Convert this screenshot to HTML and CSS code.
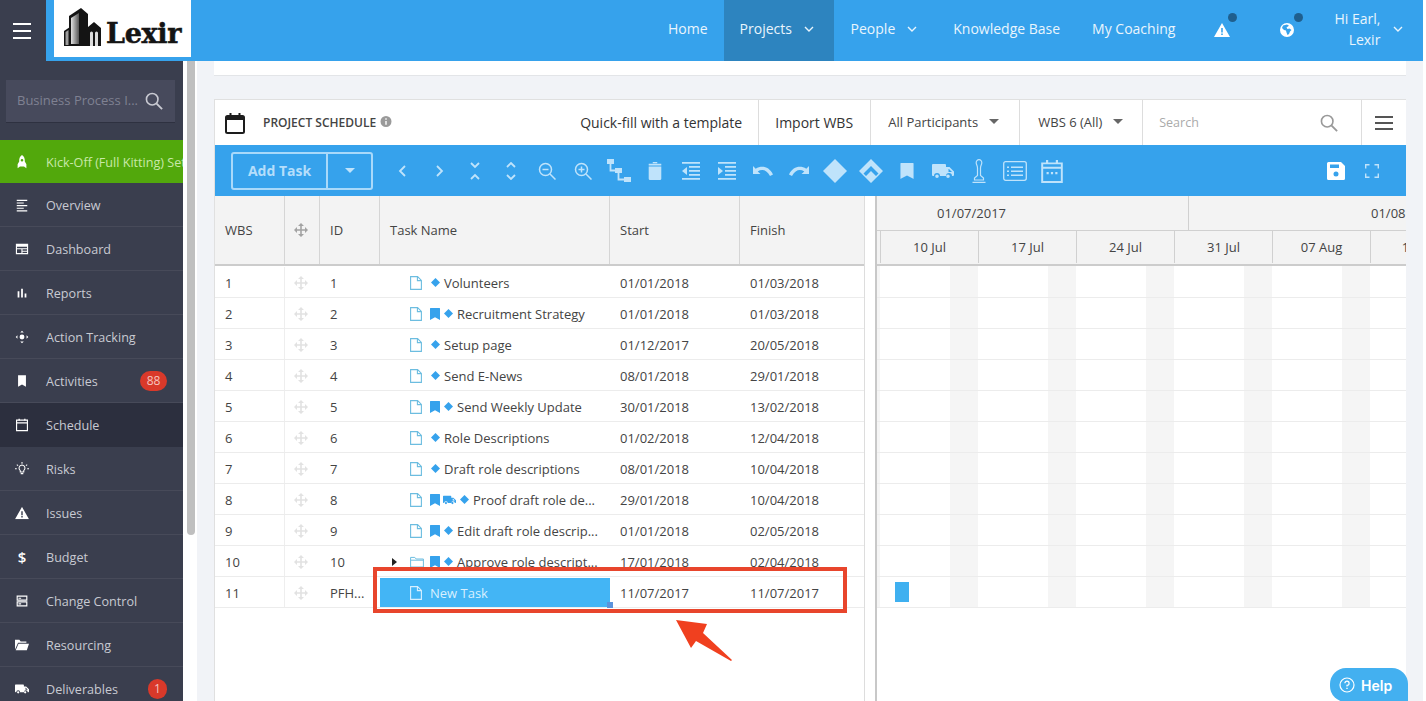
FILE: index.html
```html
<!DOCTYPE html>
<html lang="en">
<head>
<meta charset="utf-8">
<title>Project Schedule</title>
<link rel="stylesheet" href="styles.css">
</head>
<body>
<svg class="sprite" aria-hidden="true">
  <defs><linearGradient id="g-tower" x1="0" y1="0" x2="1" y2="0"><stop offset="0" stop-color="#e2e2e2"/><stop offset="1" stop-color="#555"/></linearGradient></defs>
  <symbol id="i-move" viewBox="0 0 14 14"><path d="M7 0l3 3H4zM7 14l3-3H4zM0 7l3-3v6zM14 7l-3-3v6zM6.200 3h1.600v8H6.200zM3 6.200h8v1.600H3z" fill="currentColor"/></symbol>
  <symbol id="i-file" viewBox="0 0 12 14"><path d="M.6.6h7l3.800 3.800v9H.6zM7.400.6v4h4" fill="none" stroke="currentColor" stroke-width="1.100"/></symbol>
  <symbol id="i-folder" viewBox="0 0 14 12"><path d="M.6 1.400h4.200l1.400 1.600h7.200v8H.6zM.6 4.200h12.800" fill="none" stroke="currentColor" stroke-width="1"/></symbol>
  <symbol id="i-diamond" viewBox="0 0 10 10"><path d="M5 0l5 5-5 5-5-5z" fill="currentColor"/></symbol>
  <symbol id="i-book" viewBox="0 0 10 12"><path d="M0 .5A.5.5 0 0 1 .5 0h9a.5.5 0 0 1 .5.5V12L5 9.300 0 12z" fill="currentColor"/></symbol>
  <symbol id="i-truck" viewBox="0 0 22 16"><path d="M1 1h12a1 1 0 0 1 1 1v2h3.500l4.500 4.500V12a1 1 0 0 1-1 1h-1a3 3 0 0 0-6 0H8a3 3 0 0 0-6 0H1a1 1 0 0 1-1-1V2a1 1 0 0 1 1-1zm15.500 5v3H20l-3-3z M5 11.400a1.800 1.800 0 1 1 0 3.600 1.800 1.800 0 0 1 0-3.600zm11 0a1.800 1.800 0 1 1 0 3.600 1.800 1.800 0 0 1 0-3.600z" fill="currentColor" fill-rule="evenodd"/></symbol>
  <symbol id="i-search" viewBox="0 0 20 20"><circle cx="8" cy="8" r="6.400" fill="none" stroke="currentColor" stroke-width="1.800"/><path d="M12.600 12.600L19 19" stroke="currentColor" stroke-width="2" fill="none"/></symbol>
  <symbol id="i-warn" viewBox="0 0 16 14"><path fill-rule="evenodd" d="M8 0l8 14H0zM7.200 5v4.500h1.600V5zm0 5.500v1.600h1.600v-1.600z" fill="currentColor"/></symbol>
  <symbol id="i-cal" viewBox="0 0 20 22"><rect x="1" y="4" width="18" height="17" rx="1.500" fill="none" stroke="currentColor" stroke-width="2"/><path d="M1 4h18v4H1zM4.500 1h2v3h-2zM13.500 1h2v3h-2z" fill="currentColor"/></symbol>
  <symbol id="i-undo" viewBox="0 0 22 12"><path d="M1 1v8h7.500L5.700 6.400C10 3.800 14.500 4.500 18 11l3-1.500C17 1.500 10 .2 3.700 3.700z" fill="currentColor"/></symbol>
</svg>

<div class="app">
  <header class="topbar">
    <button class="burger" aria-label="Menu"><span></span><span></span><span></span></button>
    <div class="logo">
      <svg class="logo-mark" viewBox="0 0 38 39" aria-hidden="true">
        <path d="M0 24l6-4v19H0zM5 9l12-8 7 6v32H5zM24 20l6-5 7 6v18H24z" fill="#141414"/>
        <path d="M7 11l8-5v31H7z" fill="url(#g-tower)"/>
        <path d="M1.500 25l3-2v15h-3z" fill="#9d9d9d"/>
        <path d="M26 39V26a1.500 1.500 0 0 1 3 0v13zM31 39V26a1.500 1.500 0 0 1 3 0v13z" fill="#fff" opacity=".85"/>
      </svg>
      <span class="logo-text">Lexir</span>
    </div>
    <nav class="nav">
      <a class="nav-item nav-home">Home</a>
      <a class="nav-item nav-active">Projects<svg class="chev" viewBox="0 0 10 6"><path d="M1 1l4 4 4-4" fill="none" stroke="currentColor" stroke-width="1.400"/></svg></a>
      <a class="nav-item nav-people">People<svg class="chev" viewBox="0 0 10 6"><path d="M1 1l4 4 4-4" fill="none" stroke="currentColor" stroke-width="1.400"/></svg></a>
      <a class="nav-item nav-kb">Knowledge Base</a>
      <a class="nav-item nav-coach">My Coaching</a>
      <span class="nav-icon nav-icon-warn"><svg class="ic14" viewBox="0 0 16 14"><use href="#i-warn"/></svg><i class="dot"></i></span>
      <span class="nav-icon nav-icon-globe"><svg class="ic14" viewBox="0 0 14 14"><path fill-rule="evenodd" d="M7 0a7 7 0 1 1 0 14A7 7 0 0 1 7 0zM3 2.500L2 5l2 2 2 .5.500 2 1 2.500 1.500-1 1-2.500 1.500-1.500-2-1.500-2 .5-1-1.500L9 2.800 7 1.500z" fill="currentColor"/></svg><i class="dot"></i></span>
      <span class="nav-user">Hi Earl,<br>Lexir</span>
      <svg class="chev chev-user" viewBox="0 0 10 6"><path d="M1 1l4 4 4-4" fill="none" stroke="currentColor" stroke-width="1.400"/></svg>
    </nav>
  </header>

  <div class="main">
    <aside class="sidebar">
      <div class="side-search"><span class="side-search-text">Business Process I...</span><svg class="ic18" viewBox="0 0 20 20"><use href="#i-search"/></svg></div>
      <a class="side-item side-green"><svg class="side-ic" viewBox="0 0 16 16"><path fill-rule="evenodd" d="M8 0c2.600 1.700 3.400 4.500 3.200 7.300l1.800 3.200V15l-2.700-2H5.700L3 15v-4.500l1.800-3.200C4.600 4.500 5.400 1.700 8 0zm0 4.500a1.500 1.500 0 1 0 0 3 1.500 1.500 0 0 0 0-3z" fill="currentColor"/></svg><span class="side-label">Kick-Off (Full Kitting) Setup</span></a>
      <a class="side-item"><svg class="side-ic" viewBox="0 0 16 16"><path d="M2 2h12v1.300H2zM2 5h8v1.300H2zM2 8h12v1.300H2zM2 11h8v1.300H2zM2 14h12v1.300H2z" fill="currentColor"/></svg><span class="side-label">Overview</span></a>
      <a class="side-item"><svg class="side-ic" viewBox="0 0 16 16"><path fill-rule="evenodd" d="M1 2h14v12H1zM2.300 5.500V7h11.400V5.500zM2.300 8.300v4.400h5V8.300zm6.300 0v1.600h5.100V8.300zm0 2.800v1.600h5.100v-1.600z" fill="currentColor"/></svg><span class="side-label">Dashboard</span></a>
      <a class="side-item"><svg class="side-ic" viewBox="0 0 16 16"><path d="M3 6h2v7H3zM7 3h2v10H7zM11 8.500h2V13h-2z" fill="currentColor"/></svg><span class="side-label">Reports</span></a>
      <a class="side-item"><svg class="side-ic" viewBox="0 0 16 16"><circle cx="8" cy="8" r="2.800" fill="currentColor"/><path d="M8 .8l2 2H6zM8 15.200l2-2H6zM.8 8l2-2v4zM15.200 8l-2-2v4z" fill="currentColor"/></svg><span class="side-label">Action Tracking</span></a>
      <a class="side-item"><svg class="side-ic" viewBox="0 0 16 16"><path d="M3.500 1.500h9v13L8 12l-4.500 2.500z" fill="currentColor"/></svg><span class="side-label">Activities</span><b class="badge badge-wide">88</b></a>
      <a class="side-item side-current"><svg class="side-ic" viewBox="0 0 16 16"><path d="M1.800 2.500h12.400v12H1.800zM1.800 5.500h12.400" fill="none" stroke="currentColor" stroke-width="1.300"/><path d="M4 .8h1.500v2H4zM10.500.8H12v2h-1.500z" fill="currentColor"/></svg><span class="side-label">Schedule</span></a>
      <a class="side-item"><svg class="side-ic" viewBox="0 0 16 16"><path d="M8 3.500a3.500 3.500 0 0 1 2 6.300V11.500H6V9.800a3.500 3.500 0 0 1 2-6.300z" fill="none" stroke="currentColor" stroke-width="1.200"/><path d="M6.500 12.700h3V14h-3zM7.400 0h1.200v2H7.400zM0 7h2v1.200H0zM14 7h2v1.200h-2zM2.500 2.500l1.400 1.400-.8.800-1.400-1.400zM13.500 2.500l-1.400 1.400.8.800 1.400-1.400z" fill="currentColor"/></svg><span class="side-label">Risks</span></a>
      <a class="side-item"><svg class="side-ic" viewBox="0 0 16 14"><use href="#i-warn"/></svg><span class="side-label">Issues</span></a>
      <a class="side-item"><span class="side-ic side-dollar">$</span><span class="side-label">Budget</span></a>
      <a class="side-item"><svg class="side-ic" viewBox="0 0 16 16"><path d="M2.500 2.500h11v4.500h-11zM2.500 9h11v4.500h-11z" fill="none" stroke="currentColor" stroke-width="1.300"/><path d="M4 4.200h3v1.200H4zM4 10.700h3v1.200H4z" fill="currentColor"/></svg><span class="side-label">Change Control</span></a>
      <a class="side-item"><svg class="side-ic" viewBox="0 0 16 14"><path d="M0 1h5l1.500 2H13v1.500H3.500L0 12zM4 5.500h12L13.500 13H.8z" fill="currentColor"/></svg><span class="side-label">Resourcing</span></a>
      <a class="side-item"><svg class="side-ic" viewBox="0 0 22 16"><use href="#i-truck"/></svg><span class="side-label">Deliverables</span><b class="badge">1</b></a>
    </aside>
    <div class="scrolltrack"><div class="scrollthumb"></div></div>

    <main class="content">
      <div class="strip"></div>
      <section class="card">
        <div class="card-head">
          <svg class="head-cal" viewBox="0 0 20 22"><use href="#i-cal"/></svg>
          <span class="head-title">PROJECT SCHEDULE</span>
          <svg class="head-info" viewBox="0 0 12 12"><path fill-rule="evenodd" d="M6 0a5.500 5.500 0 1 1 0 11A5.500 5.500 0 0 1 6 0zM5.300 2.300v1.500h1.400V2.300zm0 2.700v3.800h1.400V5z" fill="currentColor"/></svg>
          <a class="head-btn head-quick">Quick-fill with a template</a>
          <a class="head-btn head-import">Import WBS</a>
          <a class="head-sel head-part">All Participants<i class="caret"></i></a>
          <a class="head-sel head-wbs">WBS 6 (All)<i class="caret"></i></a>
          <div class="head-search"><span>Search</span><svg class="ic20" viewBox="0 0 20 20"><use href="#i-search"/></svg></div>
          <div class="head-menu"><span></span><span></span><span></span></div>
        </div>

        <div class="toolbar">
          <div class="addgroup"><span class="add-main">Add Task</span><span class="add-drop"><i class="caret caret-light"></i></span></div>
          <div class="tools">
            <svg class="tool" viewBox="0 0 18 18"><path d="M11 4L6 9l5 5" fill="none" stroke="currentColor" stroke-width="1.800"/></svg>
            <svg class="tool" viewBox="0 0 18 18"><path d="M7 4l5 5-5 5" fill="none" stroke="currentColor" stroke-width="1.800"/></svg>
            <svg class="tool" viewBox="0 0 18 18"><path d="M5 1l4 4 4-4M5 17l4-4 4 4" fill="none" stroke="currentColor" stroke-width="1.800"/></svg>
            <svg class="tool" viewBox="0 0 18 18"><path d="M5 5l4-4 4 4M5 13l4 4 4-4" fill="none" stroke="currentColor" stroke-width="1.800"/></svg>
            <svg class="tool" viewBox="0 0 18 18"><circle cx="7.500" cy="7.500" r="6" fill="none" stroke="currentColor" stroke-width="1.500"/><path d="M12 12l5.500 5.500M4.500 7.500h6" stroke="currentColor" stroke-width="1.500"/></svg>
            <svg class="tool" viewBox="0 0 18 18"><circle cx="7.500" cy="7.500" r="6" fill="none" stroke="currentColor" stroke-width="1.500"/><path d="M12 12l5.500 5.500M4.500 7.500h6M7.500 4.500v6" stroke="currentColor" stroke-width="1.500"/></svg>
            <svg class="tool tool-lg" viewBox="0 0 24 24"><path d="M0 0h7v5H0zM8 9h7v5H8zM17 18h7v5h-7z" fill="currentColor"/><path d="M3.500 5v6.500H8M11.500 14v6.500H17" fill="none" stroke="currentColor" stroke-width="1.800"/></svg>
            <svg class="tool" viewBox="0 0 18 20"><path d="M6.500 0h5v1.500h-5zM2 2h14v2H2zM2 5h14v13.500a1.500 1.500 0 0 1-1.500 1.500h-11A1.500 1.500 0 0 1 2 18.500z" fill="currentColor"/></svg>
            <svg class="tool" viewBox="0 0 18 18"><path d="M0 0h18v1.800H0zM7 4h11v1.800H7zM7 8h11v1.800H7zM7 12h11v1.800H7zM0 16h18v1.800H0zM5 5v8L0 9z" fill="currentColor"/></svg>
            <svg class="tool" viewBox="0 0 18 18"><path d="M0 0h18v1.800H0zM7 4h11v1.800H7zM7 8h11v1.800H7zM7 12h11v1.800H7zM0 16h18v1.800H0zM0 5v8l5-4z" fill="currentColor"/></svg>
            <svg class="tool tool-wide" viewBox="0 0 22 12"><use href="#i-undo"/></svg>
            <svg class="tool tool-wide tool-flip" viewBox="0 0 22 12"><use href="#i-undo"/></svg>
            <svg class="tool tool-lg" viewBox="0 0 24 24"><path d="M12 0l12 12-12 12L0 12z" fill="currentColor"/></svg>
            <svg class="tool tool-lg" viewBox="0 0 24 24"><path fill-rule="evenodd" d="M12 0l12 12-12 12L0 12zM12 7l-7.500 7.500L7 17l5-5 5 5 2.500-2.500z" fill="currentColor"/></svg>
            <svg class="tool" viewBox="0 0 15 20"><use href="#i-book"/></svg>
            <svg class="tool tool-wide tool-truck" viewBox="0 0 22 16"><use href="#i-truck"/></svg>
            <svg class="tool tool-lg" viewBox="0 0 16 24"><path d="M8 .7a2.800 2.800 0 0 1 2.800 3c0 2-1.300 2.800-1.300 5.300v7.500l3 2.500v2H3.500v-2l3-2.500V9c0-2.500-1.300-3.300-1.300-5.300A2.800 2.800 0 0 1 8 .7zM1.500 23.300h13" fill="none" stroke="currentColor" stroke-width="1.200"/></svg>
            <svg class="tool tool-lg" viewBox="0 0 24 20"><rect x=".7" y=".7" width="22.600" height="18.600" rx="2" fill="none" stroke="currentColor" stroke-width="1.300"/><path d="M4 5.500h2v1.500H4zM8 5.500h12v1.500H8zM4 9.500h2v1.500H4zM8 9.500h12v1.500H8zM4 13.500h2v1.500H4zM8 13.500h12v1.500H8z" fill="currentColor"/></svg>
            <svg class="tool tool-lg tool-last" viewBox="0 0 20 22"><path d="M1 4h18v17H1zM1 8h18" fill="none" stroke="currentColor" stroke-width="1.800"/><path d="M4.500 1h2v3h-2zM13.500 1h2v3h-2zM5 12h2v2H5zM9 12h2v2H9zM13 12h2v2h-2z" fill="currentColor"/></svg>
          </div>
          <div class="tools-right">
            <svg class="tool tool-save" viewBox="0 0 18 18"><path fill-rule="evenodd" d="M1.500 0H14l4 4v12.500a1.500 1.500 0 0 1-1.500 1.500h-15A1.500 1.500 0 0 1 0 16.500v-15A1.500 1.500 0 0 1 1.500 0zM3 2.500V6h9V2.500zM9 9.500a2.500 2.500 0 1 0 0 5 2.500 2.500 0 0 0 0-5z" fill="currentColor"/></svg>
            <svg class="tool tool-full" viewBox="0 0 14 14"><path d="M.7 4.500V.7h3.800M9.500.7h3.800v3.800M13.300 9.500v3.800H9.500M4.500 13.300H.7V9.500" fill="none" stroke="currentColor" stroke-width="1.400"/></svg>
          </div>
        </div>

        <div class="grid-wrap">
          <div class="table">
            <div class="thead">
              <div class="c c-wbs">WBS</div>
              <div class="c c-drag"><svg class="ic-move ic-move-h"><use href="#i-move"/></svg></div>
              <div class="c c-id">ID</div>
              <div class="c c-name">Task Name</div>
              <div class="c c-date">Start</div>
              <div class="c c-finish">Finish</div>
            </div>
            <div class="row"><div class="c c-wbs">1</div><div class="c c-drag"><svg class="ic-move"><use href="#i-move"/></svg></div><div class="c c-id">1</div><div class="c c-name t"><svg class="ic-file"><use href="#i-file"/></svg><svg class="ic-dia"><use href="#i-diamond"/></svg><span class="tn">Volunteers</span></div><div class="c c-date">01/01/2018</div><div class="c c-finish">01/03/2018</div></div>
            <div class="row"><div class="c c-wbs">2</div><div class="c c-drag"><svg class="ic-move"><use href="#i-move"/></svg></div><div class="c c-id">2</div><div class="c c-name t"><svg class="ic-file"><use href="#i-file"/></svg><svg class="ic-book"><use href="#i-book"/></svg><svg class="ic-dia"><use href="#i-diamond"/></svg><span class="tn">Recruitment Strategy</span></div><div class="c c-date">01/01/2018</div><div class="c c-finish">01/03/2018</div></div>
            <div class="row"><div class="c c-wbs">3</div><div class="c c-drag"><svg class="ic-move"><use href="#i-move"/></svg></div><div class="c c-id">3</div><div class="c c-name t"><svg class="ic-file"><use href="#i-file"/></svg><svg class="ic-dia"><use href="#i-diamond"/></svg><span class="tn">Setup page</span></div><div class="c c-date">01/12/2017</div><div class="c c-finish">20/05/2018</div></div>
            <div class="row"><div class="c c-wbs">4</div><div class="c c-drag"><svg class="ic-move"><use href="#i-move"/></svg></div><div class="c c-id">4</div><div class="c c-name t"><svg class="ic-file"><use href="#i-file"/></svg><svg class="ic-dia"><use href="#i-diamond"/></svg><span class="tn">Send E-News</span></div><div class="c c-date">08/01/2018</div><div class="c c-finish">29/01/2018</div></div>
            <div class="row"><div class="c c-wbs">5</div><div class="c c-drag"><svg class="ic-move"><use href="#i-move"/></svg></div><div class="c c-id">5</div><div class="c c-name t"><svg class="ic-file"><use href="#i-file"/></svg><svg class="ic-book"><use href="#i-book"/></svg><svg class="ic-dia"><use href="#i-diamond"/></svg><span class="tn">Send Weekly Update</span></div><div class="c c-date">30/01/2018</div><div class="c c-finish">13/02/2018</div></div>
            <div class="row"><div class="c c-wbs">6</div><div class="c c-drag"><svg class="ic-move"><use href="#i-move"/></svg></div><div class="c c-id">6</div><div class="c c-name t"><svg class="ic-file"><use href="#i-file"/></svg><svg class="ic-dia"><use href="#i-diamond"/></svg><span class="tn">Role Descriptions</span></div><div class="c c-date">01/02/2018</div><div class="c c-finish">12/04/2018</div></div>
            <div class="row"><div class="c c-wbs">7</div><div class="c c-drag"><svg class="ic-move"><use href="#i-move"/></svg></div><div class="c c-id">7</div><div class="c c-name t"><svg class="ic-file"><use href="#i-file"/></svg><svg class="ic-dia"><use href="#i-diamond"/></svg><span class="tn">Draft role descriptions</span></div><div class="c c-date">08/01/2018</div><div class="c c-finish">10/04/2018</div></div>
            <div class="row"><div class="c c-wbs">8</div><div class="c c-drag"><svg class="ic-move"><use href="#i-move"/></svg></div><div class="c c-id">8</div><div class="c c-name t"><svg class="ic-file"><use href="#i-file"/></svg><svg class="ic-book"><use href="#i-book"/></svg><svg class="ic-truck"><use href="#i-truck"/></svg><svg class="ic-dia"><use href="#i-diamond"/></svg><span class="tn">Proof draft role de...</span></div><div class="c c-date">29/01/2018</div><div class="c c-finish">10/04/2018</div></div>
            <div class="row"><div class="c c-wbs">9</div><div class="c c-drag"><svg class="ic-move"><use href="#i-move"/></svg></div><div class="c c-id">9</div><div class="c c-name t"><svg class="ic-file"><use href="#i-file"/></svg><svg class="ic-book"><use href="#i-book"/></svg><svg class="ic-dia"><use href="#i-diamond"/></svg><span class="tn">Edit draft role descrip...</span></div><div class="c c-date">01/01/2018</div><div class="c c-finish">02/05/2018</div></div>
            <div class="row"><div class="c c-wbs">10</div><div class="c c-drag"><svg class="ic-move"><use href="#i-move"/></svg></div><div class="c c-id">10</div><div class="c c-name t t-parent"><i class="tri"></i><svg class="ic-file ic-folder"><use href="#i-folder"/></svg><svg class="ic-book"><use href="#i-book"/></svg><svg class="ic-dia"><use href="#i-diamond"/></svg><span class="tn">Approve role descript...</span></div><div class="c c-date">17/01/2018</div><div class="c c-finish">02/04/2018</div></div>
            <div class="row"><div class="c c-wbs">11</div><div class="c c-drag"><svg class="ic-move"><use href="#i-move"/></svg></div><div class="c c-id">PFH...</div><div class="c c-name t t-selected"><svg class="ic-file"><use href="#i-file"/></svg><span class="tn">New Task</span><i class="handle"></i></div><div class="c c-date">11/07/2017</div><div class="c c-finish">11/07/2017</div></div>
          </div>

          <div class="splitter"></div>

          <div class="gantt">
            <div class="g-head1"><div class="g-month g-month1">01/07/2017</div><div class="g-month g-month2">01/08</div></div>
            <div class="g-head2"><div class="g-stub"></div><div class="g-week">10 Jul</div><div class="g-week">17 Jul</div><div class="g-week">24 Jul</div><div class="g-week">31 Jul</div><div class="g-week">07 Aug</div><div class="g-week g-week-end">14 Aug</div></div>
            <div class="g-body">
              <div class="g-row"></div><div class="g-row"></div><div class="g-row"></div><div class="g-row"></div><div class="g-row"></div><div class="g-row"></div><div class="g-row"></div><div class="g-row"></div><div class="g-row"></div><div class="g-row"></div>
              <div class="g-row"><div class="g-bar"></div></div>
            </div>
          </div>
        </div>
      </section>
    </main>
  </div>
  <div class="help"><svg viewBox="0 0 16 16"><circle cx="8" cy="8" r="7" fill="none" stroke="currentColor" stroke-width="1.200"/><path d="M5.900 6.200A2.100 2.100 0 1 1 8 8.300v1.200" fill="none" stroke="currentColor" stroke-width="1.200"/><path d="M7.300 10.700h1.400v1.400H7.300z" fill="currentColor"/></svg>Help</div>
  <div class="mark-box"></div>
  <svg class="mark-arrow" viewBox="0 0 60 43"><path d="M1 1l31 4-4 9 29 27-1 1-35-20-5 7z" fill="#f0401f"/></svg>
</div>
</body>
</html>
```
FILE: styles.css
```css
* { box-sizing: border-box; }
html, body { margin: 0; height: 100%; overflow: hidden; background: #fff; }
body { font-family: "Open Sans", "Liberation Sans", sans-serif; font-size: 13px; color: #444; }
.sprite { position: absolute; width: 0; height: 0; }
a { display: block; }
svg { display: block; flex: none; }

.app { position: relative; width: 1423px; height: 701px; display: flex; flex-direction: column; overflow: hidden; }

/* top bar */
.topbar { height: 61px; flex: none; background: #36a2ec; display: flex; color: #e9f5fd; }
.burger { width: 46px; height: 61px; background: #3a3e4e; border: 0; padding: 23px 13px 0; display: flex; flex-direction: column; gap: 3px; }
.burger span { display: block; height: 2px; width: 18px; background: #fff; margin-bottom: 2px; }
.logo { margin-left: 8px; width: 137px; height: 57px; background: #fff; display: flex; align-items: flex-start; padding: 7px 0 0 10px; gap: 4px; }
.logo-mark { width: 38px; height: 39px; }
.logo-text { font-family: "DejaVu Serif", serif; font-weight: 700; font-size: 27px; line-height: 30px; color: #141414; margin-top: 12px; letter-spacing: -.3px; -webkit-text-stroke: .5px #141414; }
.nav { flex: 1; display: flex; align-items: center; height: 61px; padding-left: 460px; font-size: 14px; }
.nav-item { height: 61px; line-height: 58px; padding: 0 16px 4px; display: flex; align-items: center; white-space: nowrap; }
.nav-home { padding-left: 17px; }
.nav-active { background: #2d84bf; width: 110px; }
.nav-people { padding-left: 17px; }
.chev { width: 10px; height: 6px; margin-left: 12px; }
.nav-kb { margin-left: 4px; }
.nav-icon { position: relative; width: 16px; height: 14px; color: #fff; margin-top: -2px; }
.nav-icon-warn { margin-left: 23px; }
.nav-icon-globe { margin-left: 50px; width: 14px; }
.ic14 { width: 100%; height: 100%; }
.dot { position: absolute; width: 9px; height: 9px; border-radius: 50%; background: #1f5f8e; left: 14px; top: -10px; }
.nav-user { margin-left: 40px; width: 46px; text-align: right; line-height: 21px; margin-top: -3px; }
.chev-user { margin-left: 13px; margin-top: -4px; }

/* sidebar */
.main { flex: 1; min-height: 0; display: flex; }
.sidebar { width: 183px; flex: none; background: #3a3e4e; padding-top: 19px; color: #c8cad2; overflow: hidden; }
.side-search { margin: 0 8px 18px 6px; height: 42px; background: #474a5c; box-shadow: 0 1px 0 #2e3140; display: flex; align-items: center; padding: 0 12px 0 11px; justify-content: space-between; color: #c9cad2; }
.side-search-text { font-size: 13px; color: #7f8192; white-space: nowrap; padding-bottom: 2px; }
.ic18 { width: 18px; height: 18px; }
.side-item { height: 44px; border-bottom: 1px solid #474a59; display: flex; align-items: center; padding-left: 15px; white-space: nowrap; position: relative; font-size: 12.600px; }
.side-label { padding-top: 2px; }
.side-ic { width: 14px; height: 14px; color: #fff; margin-right: 17px; }
.side-dollar { font-size: 15px; line-height: 14px; font-weight: 600; text-align: center; }
.side-green { background: #52a80c; color: #c8e8a8; height: 43px; border: 0; }
.side-current { background: #2c2f3e; border-color: #2c2f3e; }
.badge { position: absolute; right: 16px; top: 12px; min-width: 19px; height: 20px; border-radius: 10px; background: #d9392a; color: #f5c5bf; font-weight: 400; font-size: 12px; line-height: 20px; text-align: center; }
.badge-wide { width: 27px; }

.scrolltrack { width: 14px; flex: none; background: #fff; padding: 0 2px 0 4px; }
.scrollthumb { height: 474px; background: #bfbfbf; border-radius: 0 0 4px 4px; }

/* content */
.content { flex: 1; min-width: 0; background: #f1f3f7; padding: 0 17px; display: flex; flex-direction: column; }
.strip { height: 15px; flex: none; background: #fff; border-bottom: 1px solid #e3e5e8; margin-bottom: 23px; }
.card { flex: 1; min-height: 0; background: #fff; border: 1px solid #e0e0e0; border-bottom: 0; border-right: 0; display: flex; flex-direction: column; }

.card-head { height: 45px; flex: none; display: flex; align-items: center; }
.head-cal { width: 20px; height: 22px; margin-left: 10px; color: #1d1d1d; }
.head-title { margin-left: 18px; font-size: 12px; font-weight: 600; color: #444; white-space: nowrap; }
.head-info { width: 12px; height: 12px; margin: -2px 0 0 4px; color: #9a9a9a; }
.head-btn, .head-sel { height: 45px; display: flex; align-items: center; white-space: nowrap; border-right: 1px solid #ddd; }
.head-btn { font-size: 14px; color: #333; }
.head-quick { margin-left: 188px; padding-right: 16px; }
.head-import { padding: 0 17px 0 16px; width: 112px; }
.head-sel { font-size: 13px; color: #444; padding-bottom: 2px; }
.head-part { width: 149px; padding-left: 17px; }
.head-wbs { width: 123px; padding-left: 18px; }
.caret { width: 0; height: 0; border: 5px solid transparent; border-top: 5px solid #666; border-bottom: 0; margin-left: 11px; }
.caret-light { border-top-color: #bfe3fb; margin: 0; }
.head-search { width: 219px; height: 45px; border-right: 1px solid #ddd; display: flex; align-items: center; justify-content: space-between; padding: 0 23px 0 16px; color: #aaa; font-size: 12.500px; }
.ic20 { width: 18px; height: 18px; color: #999; }
.head-menu { flex: 1; display: flex; flex-direction: column; align-items: center; gap: 4px; }
.head-menu span { display: block; width: 18px; height: 2px; background: #555; }

.toolbar { height: 51px; flex: none; background: #36a2ec; display: flex; align-items: center; color: #bfe3fb; padding-left: 16px; }
.addgroup { display: flex; height: 38px; border: 2px solid #a9d9fa; border-radius: 3px; width: 142px; }
.add-main { width: 95px; border-right: 2px solid #a9d9fa; display: flex; align-items: center; justify-content: center; font-weight: 700; font-size: 14px; color: #b5defb; }
.add-drop { flex: 1; display: flex; align-items: center; justify-content: center; }
.tools { display: flex; align-items: center; margin-left: 12px; }
.tool { width: 18px; height: 18px; margin: 0 9px; color: #bfe3fb; }
.tool-lg { width: 24px; height: 24px; margin: 0 6px; }
.tool-wide { width: 22px; height: 14px; margin: 0 7px; }
.tool-truck { height: 16px; }
.tool-flip { transform: scaleX(-1); }
.tool-last { margin-left: 7px; }
.tools-right { margin-left: auto; display: flex; align-items: center; margin-right: 27px; }
.tools-right .tool { margin: 0; }
.tool-save { color: #fff; }
.tools-right .tool-full { width: 14px; height: 14px; margin-left: 20px; }

.grid-wrap { flex: 1; min-height: 0; display: flex; }
.table { width: 649px; flex: none; }
.thead { height: 70px; display: flex; background: #f3f3f3; border-bottom: 2px solid #ccc; }
.row { height: 31px; display: flex; border-bottom: 1px solid #ececec; }
.thead + .row { height: 32px; padding-top: 1px; }
.c { display: flex; align-items: center; flex: none; padding-left: 10px; white-space: nowrap; border-right: 1px solid #eee; color: #444; }
.row .c { border-right: 0; padding-top: 2px; }
.thead .c { border-right: 1px solid #d5d5d5; }
.c-wbs { width: 70px; }
.row .c-wbs { border-right: 1px solid #eee; }
.c-drag { width: 35px; padding: 0 0 0 9px; }
.c-id { width: 60px; }
.c-name { width: 230px; }
.c-date { width: 130px; }
.c-finish { flex: 1; }
.thead .c-finish { border-right: 0; }
.ic-move { width: 14px; height: 14px; color: #e2e2e2; }
.ic-move-h { color: #a3a3a3; }
.t { padding-left: 30px; position: relative; }
.ic-file { width: 12px; height: 14px; color: #6cbde0; margin-right: 8px; }
.ic-folder { width: 14px; height: 12px; margin-right: 6px; }
.ic-dia { width: 9px; height: 9px; color: #36a2ec; margin: -2px 4px 0 0; }
.ic-file + .ic-dia { margin-left: 1px; }
.ic-book { width: 10px; height: 12px; color: #36a2ec; margin-right: 4px; }
.ic-truck { width: 13px; height: 12px; color: #36a2ec; margin-right: 4px; margin-left: -1px; }
.tn { white-space: nowrap; }
.tri { position: absolute; left: 12px; top: 12px; width: 0; height: 0; border: 4px solid transparent; border-left: 5px solid #222; border-right: 0; }
.row .t-selected { background: #43b5f5; color: #d8f0ff; height: 29px; margin-top: 1px; padding-top: 0; }
.t-selected .ic-file { color: #d8f0ff; }
.handle { position: absolute; right: -3px; bottom: -1px; width: 6px; height: 6px; background: #5b93dc; }

.splitter { width: 13px; flex: none; background: #fff; border-left: 1px solid #ddd; border-right: 2px solid #c8c8c8; }
.gantt { flex: 1; min-width: 0; overflow: hidden; }
.g-head1 { height: 35px; display: flex; background: #f3f3f3; border-bottom: 1px solid #d0d0d0; }
.g-month { flex: none; display: flex; align-items: center; white-space: nowrap; }
.g-month1 { width: 312px; border-right: 1px solid #d0d0d0; justify-content: center; padding-right: 122px; }
.g-month2 { width: 400px; justify-content: flex-start; padding-left: 182px; }
.g-head2 { height: 35px; display: flex; background: #f3f3f3; border-bottom: 2px solid #ccc; padding-bottom: 1px; }
.g-stub { width: 4px; flex: none; border-right: 1px solid #d0d0d0; }
.g-week { width: 98px; flex: none; border-right: 1px solid #d0d0d0; display: flex; align-items: center; justify-content: center; white-space: nowrap; }
.g-week-end { padding-left: 6px; }
.g-body { height: 342px; background-image: linear-gradient(90deg, transparent 70px, #f5f5f5 70px); background-size: 98px 100%; background-position: 3px 0; }
.g-row { height: 31px; border-bottom: 1px solid #ececec; padding: 5px 0 0 18px; }
.g-row:first-child { height: 32px; }
.g-bar { width: 14px; height: 20px; background: #3fb0f0; }

/* overlays */
.help { position: absolute; left: 1330px; top: 668px; width: 78px; height: 34px; border-radius: 16px 16px 0 16px; background: #43b0f0; color: #fff; font-family: "Inter", "Liberation Sans", sans-serif; font-weight: 600; font-size: 14px; display: flex; align-items: center; gap: 6px; padding-left: 9px; }
.help svg { width: 16px; height: 16px; }
.mark-box { position: absolute; left: 373px; top: 567px; width: 474px; height: 46px; border: 4px solid #e8452c; }
.mark-arrow { position: absolute; left: 675px; top: 619px; width: 60px; height: 43px; }
```
